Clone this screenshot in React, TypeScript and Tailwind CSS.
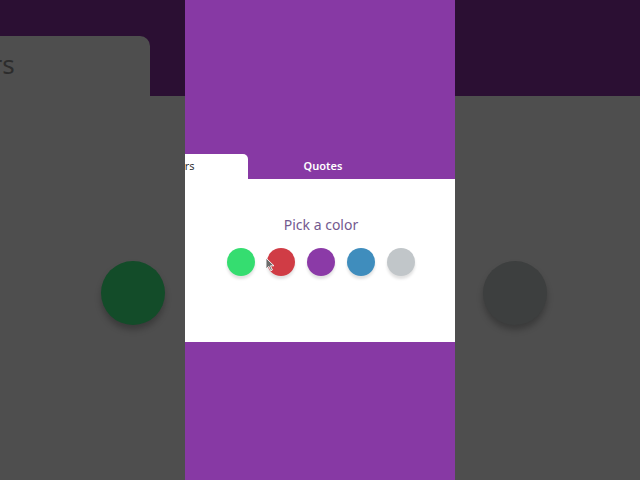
import React from 'react';

const swatches = ['#35dd70', '#d03c45', '#8b3aa7', '#3f8dbd', '#c1c6c9'];

// mouse pointer drawn over the content
const Cursor: React.FC = () => (
  <svg className="absolute left-[265px] top-[257px]" width="10" height="15" viewBox="0 0 10 15">
    <path d="M1 1 L1 12 L3.8 9.4 L5.8 13.8 L7.4 13 L5.5 8.8 L9 8.8 Z" fill="#6b6b6b" stroke="#ffffff" strokeWidth="0.9" />
  </svg>
);

const SidePanel: React.FC<{ side: 'left' | 'right' }> = ({ side }) => (
  <div className="w-[185px] h-full flex flex-col bg-[#4e4e4e] overflow-hidden">
    <div className="h-[96px] bg-[#2b0f33] flex items-end shrink-0">
      {side === 'left' && (
        <div className="w-[150px] h-[60px] bg-[#4e4e4e] rounded-tr-[10px] overflow-hidden">
          <div className="-ml-[63px] mt-[15px] text-[26px] leading-none text-[#2c2c2c]">Colors</div>
        </div>
      )}
    </div>
    <div className={`flex-1 flex ${side === 'left' ? 'justify-end pr-[20px]' : 'justify-start pl-[28px]'}`}>
      <div
        className={`mt-[165px] w-[64px] h-[64px] rounded-full shadow-[0_5px_6px_rgba(0,0,0,0.25)] ${
          side === 'left' ? 'bg-[#134c29]' : 'bg-[#3d3f3f]'
        }`}
      />
    </div>
  </div>
);

const App: React.FC = () => {
  return (
    <div className="relative w-[640px] h-[480px] flex overflow-hidden font-['Noto_Sans',sans-serif]">
      <SidePanel side="left" />

      <div className="w-[270px] h-full bg-[#8739a4] overflow-hidden">
        <div className="w-[446px] -ml-[87px] pt-[154px]">
          <div className="flex h-[25px]">
            <div className="w-[150px] pl-[10px] bg-white rounded-tr-[5px] flex items-center justify-center text-[11px] text-[#333]">
              Colors
            </div>
            <div className="w-[150px] flex items-center justify-center text-[11px] font-semibold text-white">
              Quotes
            </div>
          </div>
          <div className="h-[163px] bg-white flex flex-col items-center pt-[36px]">
            <div className="text-[14px] text-[#735a8f] leading-5">Pick a color</div>
            <div className="flex gap-3 mt-[13px]">
              {swatches.map((c) => (
                <div
                  key={c}
                  className="w-7 h-7 rounded-full shadow-[0_3px_3px_rgba(0,0,0,0.12)]"
                  style={{ backgroundColor: c }}
                />
              ))}
            </div>
          </div>
        </div>
      </div>

      <SidePanel side="right" />
      <Cursor />
    </div>
  );
};

export default App;
